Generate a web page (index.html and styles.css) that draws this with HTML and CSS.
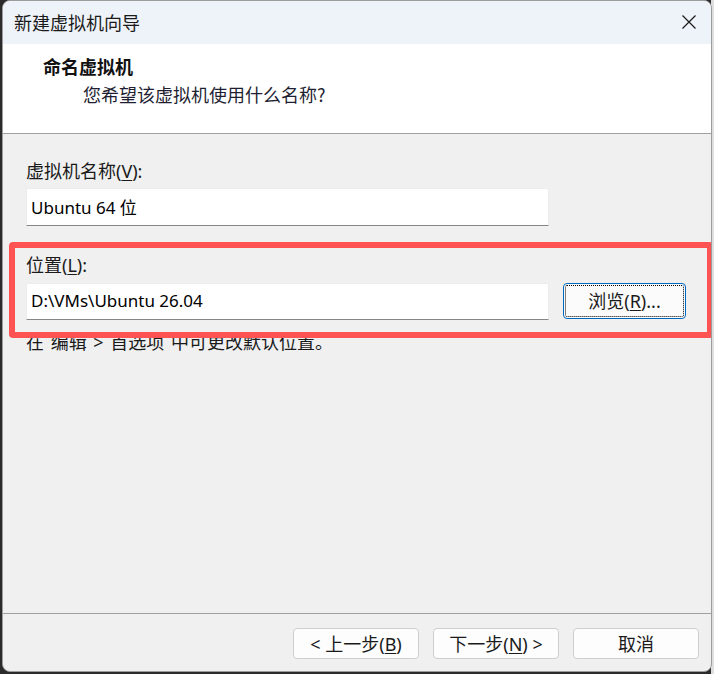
FILE: index.html
```html
<!DOCTYPE html>
<html lang="zh-CN">
  <head>
    <meta charset="UTF-8" />
    <meta name="viewport" content="width=device-width, initial-scale=1.0" />
    <title>新建虚拟机向导</title>
    <link rel="stylesheet" href="styles.css">
  </head>
  <body>
    <div class="window">
      <div class="titlebar">
        <span class="title">新建虚拟机向导</span>
        <span class="close">
          <svg width="16" height="16" viewBox="0 0 16 16">
            <path d="M1.5 1.5 L14.5 14.5 M14.5 1.5 L1.5 14.5" stroke="#1a1a1a" stroke-width="1.2" fill="none" />
          </svg>
        </span>
      </div>

      <div class="header">
        <div class="heading">命名虚拟机</div>
        <div class="subheading">您希望该虚拟机使用什么名称?</div>
      </div>

      <div class="content">
        <label class="field-label">虚拟机名称(<u>V</u>):</label>
        <input class="text-field" type="text" value="Ubuntu 64 位" />

        <label class="field-label location-label">位置(<u>L</u>):</label>
        <div class="location-row">
          <input class="text-field" type="text" value="D:\VMs\Ubuntu 26.04" />
          <button class="browse-btn">浏览(<u>R</u>)...</button>
        </div>

        <p class="hint">在 编辑 &gt; 首选项 中可更改默认位置。</p>
      </div>

      <div class="footer">
        <button class="wizard-btn">&lt; 上一步(<u>B</u>)</button>
        <button class="wizard-btn">下一步(<u>N</u>) &gt;</button>
        <button class="wizard-btn">取消</button>
      </div>

      <!-- annotation box drawn over the location field -->
      <div class="highlight"></div>
    </div>
  </body>
</html>
```

FILE: styles.css
```css
html,
body {
  margin: 0;
  padding: 0;
}
body {
  background: linear-gradient(to right, #2b2b2b 0 711px, #dedede 711px);
  height: 674px;
  overflow: hidden;
  font-family: "Noto Sans", "Noto Sans CJK SC", sans-serif;
  font-size: 18px;
  color: #1a1a1a;
}
.window {
  position: relative;
  margin-left: 2px;
  width: 708px;
  height: 670px;
  border: 1px solid #9c9c9c;
  border-radius: 8px;
  background: #f0f0f0;
  display: flex;
  flex-direction: column;
  overflow: hidden;
}
.titlebar {
  height: 43px;
  background: #eef2f9;
  display: flex;
  align-items: center;
  justify-content: space-between;
  padding: 0 14px 0 11px;
  flex-shrink: 0;
}
.title {
  font-family: "Noto Sans CJK SC", sans-serif;
  font-size: 18px;
  line-height: 24px;
  margin-top: -2px;
}
.close {
  display: flex;
  margin-top: -2px;
}
.header {
  height: 89px;
  background: #ffffff;
  border-bottom: 1px solid #a0a0a0;
  box-sizing: content-box;
  flex-shrink: 0;
}
.heading {
  font-family: "Noto Sans CJK SC", sans-serif;
  font-weight: 700;
  line-height: 24px;
  margin: 10px 0 0 40px;
  color: #111;
}
.subheading {
  font-family: "Noto Sans CJK SC", sans-serif;
  line-height: 24px;
  margin: 4px 0 0 80px;
  color: #1f1f33;
}
.content {
  flex: 1;
  padding: 25px 23px 0 23px;
  display: flex;
  flex-direction: column;
  align-items: flex-start;
}
.field-label {
  line-height: 24px;
  color: #1a1a1a;
}
u {
  text-underline-offset: 2px;
}
.text-field {
  box-sizing: border-box;
  width: 523px;
  height: 38px;
  margin-top: 5px;
  padding: 0 4px 2px;
  font-family: "Noto Sans", "Noto Sans CJK SC", sans-serif;
  font-size: 17px;
  color: #000;
  background: #ffffff;
  border: 1px solid #ececec;
  border-bottom: 1px solid #868686;
  border-radius: 2px 2px 0 0;
  outline: none;
}
.location-label {
  margin-top: 27px;
}
.location-row {
  display: flex;
  align-items: flex-start;
  margin-top: 1px;
}
.location-row .text-field {
  height: 37px;
}
.browse-btn {
  box-sizing: border-box;
  width: 123px;
  height: 36px;
  margin: 5px 0 0 14px;
  font-family: "Noto Sans", "Noto Sans CJK SC", sans-serif;
  font-size: 18px;
  color: #1a1a1a;
  background: #fbfbfb;
  border: 1px solid #0067c0;
  border-radius: 4px;
  outline: 1px dotted #000;
  outline-offset: -3px;
  padding: 0 0 2px;
}
.hint {
  margin: 10px 0 0;
  line-height: 24px;
  word-spacing: 2px;
  color: #1a1a1a;
}
.footer {
  flex-shrink: 0;
  height: 43px;
  border-top: 1px solid #a0a0a0;
  padding: 14px 12px 0 0;
  display: flex;
  justify-content: flex-end;
  gap: 14px;
}
.wizard-btn {
  box-sizing: border-box;
  width: 126px;
  height: 31px;
  font-family: "Noto Sans", "Noto Sans CJK SC", sans-serif;
  font-size: 18px;
  color: #1a1a1a;
  background: #fdfdfd;
  border: 1px solid #cfcfcf;
  border-radius: 4px;
  padding: 0 0 2px;
}
.highlight {
  position: absolute;
  left: 6px;
  top: 241px;
  width: 704px;
  height: 96px;
  box-sizing: border-box;
  border: 6px solid #ff5353;
  border-radius: 4px;
  pointer-events: none;
}
```
